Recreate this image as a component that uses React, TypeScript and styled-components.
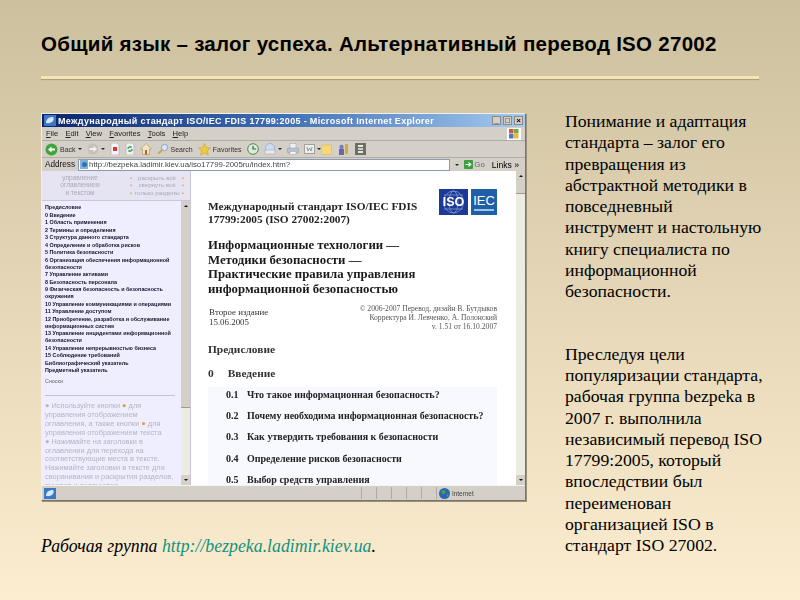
import styled, { createGlobalStyle } from 'styled-components';

const GlobalStyle = createGlobalStyle`
  html, body {
    margin: 0;
    padding: 0;
  }
`;

const Slide = styled.div`
  width: 800px;
  height: 600px;
  box-sizing: border-box;
  padding: 32px 41px 0;
  overflow: hidden;
  background: linear-gradient(180deg, #cdc09e 0%, #fcedd0 100%);
  font-family: 'Liberation Serif', serif;
  color: #000;
`;

const Title = styled.h1`
  margin: 0;
  font: bold 20.5px/24px 'Liberation Sans', sans-serif;
  letter-spacing: 0.28px;
  white-space: nowrap;
`;

const Rule = styled.div`
  height: 3px;
  margin-top: 20px;
  width: 718px;
  background: #f5e4b6;
  box-shadow: 0 1px 1px #a8987a;
`;

const Columns = styled.div`
  display: grid;
  grid-template-columns: 485px 200px;
  column-gap: 39px;
  margin-top: 34px;
`;

const LeftColumn = styled.div`
  display: flex;
  flex-direction: column;
`;

const Browser = styled.div`
  width: 485px;
  height: 388px;
  box-sizing: border-box;
  display: flex;
  flex-direction: column;
  background: #d4d0c8;
  border: 1px solid #f0efe8;
  border-right-color: #77746c;
  border-bottom-color: #77746c;
  box-shadow: 1px 1px 0 #9c917a;
  font-family: 'Liberation Sans', sans-serif;
  filter: blur(0.45px);
`;

const TitleBar = styled.div`
  height: 13px;
  flex: none;
  display: flex;
  align-items: center;
  gap: 2px;
  padding: 0 2px;
  background: linear-gradient(90deg, #0a246a 0%, #3f6fb5 50%, #a6caf0 100%);
  color: #fff;
  font-size: 9px;
  font-weight: bold;
  white-space: nowrap;
`;

const TitleText = styled.span`
  flex: 1;
  letter-spacing: 0.34px;
`;

const WinButton = styled.span`
  width: 9px;
  height: 9px;
  box-sizing: border-box;
  display: flex;
  align-items: center;
  justify-content: center;
  background: #d4d0c8;
  border: 1px solid #8a8880;
  color: #000;
  font-size: 8px;
  line-height: 1;
`;

const MenuBar = styled.div`
  height: 13px;
  flex: none;
  display: flex;
  align-items: center;
  gap: 7.2px;
  padding: 0 4px;
  position: relative;
  font-size: 7.6px;
  color: #222;
  border-bottom: 1px solid #b0ada4;
`;

const MenuItem = styled.span`
  &::first-letter {
    text-decoration: underline;
  }
`;

const Flag = styled.span`
  margin-left: auto;
  width: 14px;
  height: 12px;
  display: flex;
  align-items: center;
  justify-content: center;
  background: #fff;
`;

const ToolBar = styled.div`
  height: 17px;
  flex: none;
  box-sizing: border-box;
  display: flex;
  align-items: center;
  gap: 5px;
  padding: 0 3px;
  font-size: 7px;
  color: #333;
  border-bottom: 1px solid #b0ada4;
`;

const ToolEnd = styled.div`
  display: flex;
  align-items: center;
  gap: 6px;
  margin-left: -5px;
`;

const ToolLabel = styled.span`
  display: flex;
  align-items: center;
  gap: 2px;
`;

const Caret = styled.span`
  width: 0;
  height: 0;
  border-left: 2px solid transparent;
  border-right: 2px solid transparent;
  border-top: 2px solid #222;
`;

const AddressBar = styled.div`
  height: 13px;
  flex: none;
  display: flex;
  align-items: center;
  gap: 2px;
  padding: 0 6px 0 3px;
  font-size: 8.6px;
`;

const AddressLabel = styled.span`
  color: #111;
  margin-right: 1px;
  font-size: 8.2px;
`;

const AddressField = styled.div`
  flex: 1;
  height: 12px;
  box-sizing: border-box;
  display: flex;
  align-items: center;
  gap: 1px;
  padding: 0 1px;
  background: #fff;
  border: 1px solid #8a9ab5;
  font-size: 7.8px;
  color: #444;
  white-space: nowrap;
  overflow: hidden;
`;

const DropButton = styled.span`
  margin-left: auto;
  width: 9px;
  height: 10px;
  flex: none;
  display: flex;
  align-items: center;
  justify-content: center;
  background: #d4d0c8;
`;

const GoLabel = styled.span`
  display: flex;
  align-items: center;
  gap: 1px;
  color: #666;
  margin: 0 5px 0 1px;
  font-size: 7.8px;
`;

const Viewport = styled.div`
  flex: 1;
  min-height: 0;
  display: flex;
  background: #fff;
`;

const Sidebar = styled.div`
  width: 148px;
  flex: none;
  display: flex;
  flex-direction: column;
  background: #eeeefc;
`;

const SideHeader = styled.div`
  height: 30px;
  flex: none;
  box-sizing: border-box;
  display: grid;
  grid-template-columns: 76px 1fr;
  column-gap: 10px;
  align-items: center;
  padding: 2px 4px 3px 0;
  background: #e6e4f3;
  border-bottom: 1px solid #c7c7de;
  color: #a9a9b8;
  font-size: 6.2px;
  line-height: 7.3px;
`;

const SideHeaderTitle = styled.div`
  text-align: center;
  font-size: 6.5px;
`;

const SideControls = styled.div`
  display: flex;
  flex-direction: column;
`;

const SideControl = styled.div`
  display: flex;
  justify-content: space-between;
  padding: 0 2px;
  white-space: nowrap;
  text-align: center;
  &::before,
  &::after {
    content: '•';
    color: #d89f58;
  }
`;

const SideBody = styled.div`
  flex: 1;
  min-height: 0;
  display: flex;
`;

const SideScroll = styled.div`
  flex: 1;
  min-width: 0;
  overflow: hidden;
  padding: 3px 6px 0 3px;
  background: #eeeeff;
`;

const TocItem = styled.div<{ $plain?: boolean }>`
  font-size: 5.4px;
  line-height: 7px;
  padding-bottom: 0.5px;
  font-weight: ${(p) => (p.$plain ? 'normal' : 'bold')};
  color: #14142a;
`;

const Annex = styled(TocItem)`
  margin-top: 3px;
  color: #666;
`;

const Divider = styled.div`
  height: 1px;
  margin: 10px 0 6px;
  background: #c0c0da;
`;

const Hint = styled.p`
  margin: 0;
  font-size: 7.4px;
  line-height: 8.9px;
  color: #b4b4c6;
  white-space: nowrap;
`;

const HintMark = styled.span`
  color: #d89f58;
`;

const Scrollbar = styled.div<{ $thumbHeight: number }>`
  width: 9px;
  flex: none;
  display: flex;
  flex-direction: column;
  background: #ecebe4;
  &::before {
    content: '';
    height: ${(p) => p.$thumbHeight}px;
    background: #d4d0c8;
    border-bottom: 1px solid #9d9a92;
  }
`;

const ScrollTrack = styled.div`
  position: relative;
  display: flex;
`;

const ScrollArrow = styled.span<{ $down?: boolean }>`
  position: absolute;
  right: 0;
  ${(p) => (p.$down ? 'bottom: 0;' : 'top: 0;')}
  width: 9px;
  height: 10px;
  display: flex;
  align-items: center;
  justify-content: center;
  background: #d4d0c8;
  &::after {
    content: '';
    border-left: 2px solid transparent;
    border-right: 2px solid transparent;
    ${(p) => (p.$down ? 'border-top: 2px solid #111;' : 'border-bottom: 2px solid #111;')}
  }
`;

const Page = styled.div`
  flex: 1;
  min-width: 0;
  overflow: hidden;
  padding: 19px 19px 0 17px;
  font-family: 'Liberation Serif', serif;
  border-left: 1px solid #c9c7d6;
`;

const DocHead = styled.div`
  display: flex;
  justify-content: space-between;
  align-items: flex-start;
`;

const DocName = styled.div`
  margin-top: 10px;
  font-size: 11.3px;
  line-height: 12.6px;
  font-weight: bold;
  color: #222;
  white-space: nowrap;
`;

const Logos = styled.div`
  display: flex;
  gap: 3px;
  margin-top: -1px;
`;

const Logo = styled.div<{ $bg: string; $width: number }>`
  position: relative;
  width: ${(p) => p.$width}px;
  height: 26px;
  display: flex;
  align-items: center;
  justify-content: center;
  background: ${(p) => p.$bg};
  color: #fff;
  font-family: 'Liberation Sans', sans-serif;
`;

const LogoGlobe = styled.svg`
  position: absolute;
  inset: 0;
`;

const IsoText = styled.span`
  position: relative;
  font-size: 12.5px;
  font-weight: bold;
`;

const IecText = styled.span`
  font-size: 13px;
  margin-top: -4px;
`;

const IecBar = styled.span`
  position: absolute;
  left: 3px;
  right: 3px;
  bottom: 4px;
  height: 2px;
  background: #9fc4e6;
`;

const DocTitle = styled.h2`
  margin: 13px 0 0;
  font-size: 12.8px;
  line-height: 14.6px;
  font-weight: bold;
  color: #1a1a1a;
  white-space: nowrap;
`;

const Edition = styled.div`
  display: flex;
  justify-content: space-between;
  margin-top: 7px;
`;

const EditionLeft = styled.div`
  font-size: 8.9px;
  line-height: 10.4px;
  padding: 3px 0 0 1px;
  color: #333;
`;

const EditionRight = styled.div`
  text-align: right;
  font-size: 7.6px;
  line-height: 9px;
  color: #555;
  white-space: nowrap;
`;

const SectionHead = styled.div`
  display: flex;
  gap: 14px;
  margin-top: 12px;
  font-size: 11.4px;
  line-height: 12px;
  font-weight: bold;
  color: #333;
`;

const SectionNext = styled(SectionHead)`
  margin-top: 12px;
`;

const SubList = styled.div`
  margin-top: 8px;
  padding: 1.500px 0 0 18px;
  background: #f8f8ff;
`;

const SubRow = styled.div`
  display: flex;
  height: 13px;
  margin-bottom: 8.2px;
  align-items: center;
  font-size: 10px;
  font-weight: bold;
  color: #222;
  white-space: nowrap;
`;

const SubNum = styled.span`
  width: 21px;
  flex: none;
`;

const StatusBar = styled.div`
  height: 14px;
  flex: none;
  display: flex;
  align-items: center;
  border-top: 1px solid #f4f3ee;
  font-size: 6.4px;
  color: #444;
`;

const StatusMain = styled.div`
  flex: 1;
  padding-left: 2px;
  display: flex;
  align-items: center;
`;

const StatusCell = styled.div`
  width: 14px;
  height: 12px;
  border-left: 1px solid #aeaba3;
`;

const StatusZone = styled.div`
  width: 89px;
  height: 12px;
  display: flex;
  align-items: center;
  gap: 2px;
  padding-left: 2px;
  box-sizing: border-box;
  border-left: 1px solid #aeaba3;
`;

const Caption = styled.p`
  margin: 35px 0 0;
  font-size: 17.8px;
  line-height: 20px;
  font-style: italic;
  white-space: nowrap;
`;

const CaptionLink = styled.span`
  color: #14917f;
`;

const Aside = styled.div`
  display: flex;
  flex-direction: column;
  gap: 41px;
  margin-top: -2px;
`;

const AsideText = styled.p`
  margin: 0;
  font-size: 17.7px;
  line-height: 21.3px;
  color: #000;
  white-space: nowrap;
`;

const BackIcon = () => (
  <svg width="13" height="13" viewBox="0 0 13 13">
    <circle cx="6.5" cy="6.5" r="6" fill="#3fa53a" />
    <path d="M3 6.5 6.5 3.5V5.5H10V7.5H6.5V9.5Z" fill="#fff" />
  </svg>
);

const ForwardIcon = () => (
  <svg width="12" height="12" viewBox="0 0 12 12">
    <circle cx="6" cy="6" r="5.5" fill="#c4c2ba" />
    <path d="M10 6 6.5 3V5H2.500V7H6.500V9Z" fill="#f2f1ec" />
  </svg>
);

const StopIcon = () => (
  <svg width="10" height="12" viewBox="0 0 10 12">
    <path d="M1 0H7L9 2V12H1Z" fill="#f4f4f8" stroke="#a9a9b4" strokeWidth=".6" />
    <rect x="3" y="4" width="4" height="4" fill="#d8392c" />
  </svg>
);

const RefreshIcon = () => (
  <svg width="10" height="12" viewBox="0 0 10 12">
    <path d="M1 0H7L9 2V12H1Z" fill="#eef0f6" stroke="#a9a9b4" strokeWidth=".6" />
    <path d="M3 6a2 2 0 0 1 3.500-1.500M7 6a2 2 0 0 1-3.500 1.500" fill="none" stroke="#2f9a3a" strokeWidth="1.300" />
  </svg>
);

const HomeIcon = () => (
  <svg width="12" height="12" viewBox="0 0 12 12">
    <path d="M6 .5 .5 6H2.500V11.500H9.500V6H11.500Z" fill="#efe6c6" stroke="#b08a4a" strokeWidth=".6" />
    <rect x="5" y="7" width="2" height="4.500" fill="#c8572e" />
  </svg>
);

const SearchIcon = () => (
  <svg width="12" height="12" viewBox="0 0 12 12">
    <circle cx="7.500" cy="4.500" r="3.200" fill="#d7e5f4" stroke="#8aa7c6" />
    <path d="M5 7 1.500 10.500" stroke="#d2a23c" strokeWidth="1.800" />
  </svg>
);

const StarIcon = () => (
  <svg width="13" height="13" viewBox="0 0 13 13">
    <path d="M6.500.5 8.300 4.600 12.500 5 9.300 7.800 10.300 12.200 6.500 9.900 2.700 12.200 3.700 7.800.5 5 4.700 4.600Z" fill="#f0c93a" stroke="#c39b2a" strokeWidth=".5" />
  </svg>
);

const HistoryIcon = () => (
  <svg width="12" height="12" viewBox="0 0 12 12">
    <circle cx="6" cy="6" r="5.300" fill="#dfe8da" stroke="#4c8a52" />
    <path d="M6 3V6H9" fill="none" stroke="#2c6c3a" strokeWidth="1.200" />
  </svg>
);

const MailIcon = () => (
  <svg width="12" height="12" viewBox="0 0 12 12">
    <circle cx="6" cy="5" r="4.500" fill="#cddcee" stroke="#8da7c6" strokeWidth=".7" />
    <rect x="1" y="7" width="10" height="4" fill="#e9e9ee" stroke="#9aa0ac" strokeWidth=".5" />
  </svg>
);

const PrintIcon = () => (
  <svg width="12" height="12" viewBox="0 0 12 12">
    <rect x="3" y=".5" width="6" height="5" fill="#eef0f6" stroke="#9aa0ac" strokeWidth=".5" />
    <rect x=".5" y="5" width="11" height="5" rx="1" fill="#bcc2cf" stroke="#8d93a0" strokeWidth=".5" />
    <rect x="3" y="8.500" width="6" height="3" fill="#f6f6f8" stroke="#9aa0ac" strokeWidth=".5" />
  </svg>
);

const EditIcon = () => (
  <svg width="11" height="10" viewBox="0 0 11 10">
    <rect x=".5" y=".5" width="10" height="9" fill="#eeeee8" stroke="#a2a29a" />
    <path d="M3 3 4 7 5.500 4 7 7 8 3" fill="none" stroke="#7a86a8" strokeWidth=".8" />
  </svg>
);

const FolderIcon = () => (
  <svg width="11" height="11" viewBox="0 0 11 11">
    <rect x=".5" y="1" width="10" height="9.500" rx="1" fill="#f5d978" stroke="#d6b24d" strokeWidth=".5" />
  </svg>
);

const MessengerIcon = () => (
  <svg width="11" height="12" viewBox="0 0 11 12">
    <circle cx="3.500" cy="4" r="2.200" fill="#7d79b8" />
    <rect x="1" y="6" width="5" height="6" fill="#6a66a8" />
    <rect x="7" y="1" width="3" height="10" fill="#c9b13e" />
  </svg>
);

const ResearchIcon = () => (
  <svg width="11" height="12" viewBox="0 0 11 12">
    <rect width="11" height="12" fill="#6e6e68" />
    <rect x="3" y="2" width="5" height="2" fill="#e6e6de" />
    <rect x="3" y="5" width="5" height="2" fill="#cfcfc6" />
    <rect x="3" y="8" width="5" height="2" fill="#e6e6de" />
  </svg>
);

const PageIcon = () => (
  <svg width="8" height="9" viewBox="0 0 8 9">
    <rect width="8" height="9" fill="#7fb0de" />
    <circle cx="4.500" cy="4.500" r="2.500" fill="#2f6fb5" />
  </svg>
);

const GoIcon = () => (
  <svg width="9" height="9" viewBox="0 0 9 9">
    <rect width="9" height="9" rx="1" fill="#3a9f3f" />
    <path d="M1.500 4.500H6M4.500 2.500 6.800 4.500 4.500 6.500" fill="none" stroke="#fff" strokeWidth="1.100" />
  </svg>
);

const XpFlagIcon = () => (
  <svg width="10" height="10" viewBox="0 0 10 10">
    <rect x="0" y="0" width="4.500" height="4.500" fill="#d8553a" />
    <rect x="5" y="0" width="4.500" height="4.500" fill="#78a83c" />
    <rect x="0" y="5" width="4.500" height="4.500" fill="#4a78c8" />
    <rect x="5" y="5" width="4.500" height="4.500" fill="#e8b93a" />
  </svg>
);

const EarthIcon = ({ size }: { size: number }) => (
  <svg width={size} height={size} viewBox="0 0 10 10">
    <circle cx="5" cy="5" r="5" fill="#2a66b8" />
    <path d="M2 2.500 5 1.500 6 4 4 6 2.500 5ZM7 5.500 9 6 7.500 8.500Z" fill="#4f9d46" />
  </svg>
);

const WindowDoc = () => (
  <svg width="12" height="11" viewBox="0 0 12 11">
    <rect width="12" height="11" fill="#3c78c8" />
    <path d="M2 8C2 4 5 2 9 2 11 5 8 9 2 8Z" fill="#d8e8f8" />
  </svg>
);

const tocItems = [
  'Предисловие',
  '0  Введение',
  '1  Область применения',
  '2  Термины и определения',
  '3  Структура данного стандарта',
  '4  Определение и обработка рисков',
  '5  Политика безопасности',
  '6  Организация обеспечения информационной безопасности',
  '7  Управление активами',
  '8  Безопасность персонала',
  '9  Физическая безопасность и безопасность окружения',
  '10  Управление коммуникациями и операциями',
  '11  Управление доступом',
  '12  Приобретение, разработка и обслуживание информационных систем',
  '13  Управление инцидентами информационной безопасности',
  '14  Управление непрерывностью бизнеса',
  '15  Соблюдение требований',
  'Библиографический указатель',
  'Предметный указатель',
];

const subItems = [
  ['0.1', 'Что такое информационная безопасность?'],
  ['0.2', 'Почему необходима информационная безопасность?'],
  ['0.3', 'Как утвердить требования к безопасности'],
  ['0.4', 'Определение рисков безопасности'],
  ['0.5', 'Выбор средств управления'],
];

export default function App() {
  return (
    <Slide>
      <GlobalStyle />
      <Title>Общий язык – залог успеха. Альтернативный перевод ISO 27002</Title>
      <Rule />
      <Columns>
        <LeftColumn>
          <Browser>
            <TitleBar>
              <WindowDoc />
              <TitleText>Международный стандарт ISO/IEC FDIS 17799:2005 - Microsoft Internet Explorer</TitleText>
              <WinButton>_</WinButton>
              <WinButton>□</WinButton>
              <WinButton>×</WinButton>
            </TitleBar>
            <MenuBar>
              <MenuItem>File</MenuItem>
              <MenuItem>Edit</MenuItem>
              <MenuItem>View</MenuItem>
              <MenuItem>Favorites</MenuItem>
              <MenuItem>Tools</MenuItem>
              <MenuItem>Help</MenuItem>
              <Flag>
                <XpFlagIcon />
              </Flag>
            </MenuBar>
            <ToolBar>
              <ToolLabel>
                <BackIcon />
                Back
                <Caret />
              </ToolLabel>
              <ToolLabel>
                <ForwardIcon />
                <Caret />
              </ToolLabel>
              <StopIcon />
              <RefreshIcon />
              <HomeIcon />
              <ToolLabel>
                <SearchIcon />
                Search
              </ToolLabel>
              <ToolLabel>
                <StarIcon />
                Favorites
              </ToolLabel>
              <HistoryIcon />
              <ToolLabel>
                <MailIcon />
                <Caret />
              </ToolLabel>
              <PrintIcon />
              <ToolLabel>
                <EditIcon />
                <Caret />
              </ToolLabel>
              <ToolEnd>
                <FolderIcon />
                <MessengerIcon />
                <ResearchIcon />
              </ToolEnd>
            </ToolBar>
            <AddressBar>
              <AddressLabel>Address</AddressLabel>
              <AddressField>
                <PageIcon />
                http://bezpeka.ladimir.kiev.ua/iso17799-2005ru/index.htm?
              </AddressField>
              <DropButton>
                <Caret />
              </DropButton>
              <GoLabel>
                <GoIcon />
                Go
              </GoLabel>
              <span>Links »</span>
            </AddressBar>
            <Viewport>
              <Sidebar>
                <SideHeader>
                  <SideHeaderTitle>
                    управление
                    <br />
                    оглавлением
                    <br />
                    и текстом
                  </SideHeaderTitle>
                  <SideControls>
                    <SideControl>раскрыть всё</SideControl>
                    <SideControl>свернуть всё</SideControl>
                    <SideControl>только разделы</SideControl>
                  </SideControls>
                </SideHeader>
                <SideBody>
                  <SideScroll>
                    {tocItems.map((item) => (
                      <TocItem key={item}>{item}</TocItem>
                    ))}
                    <Annex $plain>Сноски</Annex>
                    <Divider />
                    <Hint>
                      ● Используйте кнопки <HintMark>●</HintMark> для
                      <br />
                      управления отображением
                      <br />
                      оглавления, а также кнопки <HintMark>●</HintMark> для
                      <br />
                      управления отображением текста
                      <br />● Нажимайте на заголовки в
                      <br />
                      оглавлении для перехода на
                      <br />
                      соответствующие места в тексте.
                      <br />
                      Нажимайте заголовки в тексте для
                      <br />
                      сворачивания и раскрытия разделов,
                      <br />
                      пунктов и подпунктов.
                    </Hint>
                  </SideScroll>
                  <ScrollTrack>
                    <Scrollbar $thumbHeight={206} />
                    <ScrollArrow />
                    <ScrollArrow $down />
                  </ScrollTrack>
                </SideBody>
              </Sidebar>
              <Page>
                <DocHead>
                  <DocName>
                    Международный стандарт ISO/IEC FDIS
                    <br />
                    17799:2005 (ISO 27002:2007)
                  </DocName>
                  <Logos>
                    <Logo $bg="#1b3a97" $width={29}>
                      <LogoGlobe width="29" height="26" viewBox="0 0 29 26">
                        <ellipse cx="14.500" cy="13" rx="10" ry="11" fill="none" stroke="#8ea2d6" strokeWidth=".7" />
                        <ellipse cx="14.500" cy="13" rx="4.500" ry="11" fill="none" stroke="#8ea2d6" strokeWidth=".7" />
                        <path d="M5 6H24M5 20H24" stroke="#8ea2d6" strokeWidth=".7" />
                      </LogoGlobe>
                      <IsoText>ISO</IsoText>
                    </Logo>
                    <Logo $bg="#1f5fa8" $width={26}>
                      <IecText>IEC</IecText>
                      <IecBar />
                    </Logo>
                  </Logos>
                </DocHead>
                <DocTitle>
                  Информационные технологии —
                  <br />
                  Методики безопасности —
                  <br />
                  Практические правила управления
                  <br />
                  информационной безопасностью
                </DocTitle>
                <Edition>
                  <EditionLeft>
                    Второе издание
                    <br />
                    15.06.2005
                  </EditionLeft>
                  <EditionRight>
                    © 2006-2007 Перевод, дизайн В. Бутдыков
                    <br />
                    Корректура И. Левченко, А. Полонский
                    <br />
                    v. 1.51 от 16.10.2007
                  </EditionRight>
                </Edition>
                <SectionHead>Предисловие</SectionHead>
                <SectionNext>
                  <span>0</span>
                  <span>Введение</span>
                </SectionNext>
                <SubList>
                  {subItems.map(([num, text]) => (
                    <SubRow key={num}>
                      <SubNum>{num}</SubNum>
                      {text}
                    </SubRow>
                  ))}
                </SubList>
              </Page>
              <ScrollTrack>
                <Scrollbar $thumbHeight={22} />
                <ScrollArrow />
                <ScrollArrow $down />
              </ScrollTrack>
            </Viewport>
            <StatusBar>
              <StatusMain>
                <WindowDoc />
              </StatusMain>
              <StatusCell />
              <StatusCell />
              <StatusCell />
              <StatusCell />
              <StatusCell />
              <StatusZone>
                <EarthIcon size={11} />
                Internet
              </StatusZone>
            </StatusBar>
          </Browser>
          <Caption>
            Рабочая группа <CaptionLink>http://bezpeka.ladimir.kiev.ua</CaptionLink>.
          </Caption>
        </LeftColumn>
        <Aside>
          <AsideText>
            Понимание и адаптация
            <br />
            стандарта – залог его
            <br />
            превращения из
            <br />
            абстрактной методики в
            <br />
            повседневный
            <br />
            инструмент и настольную
            <br />
            книгу специалиста по
            <br />
            информационной
            <br />
            безопасности.
          </AsideText>
          <AsideText>
            Преследуя цели
            <br />
            популяризации стандарта,
            <br />
            рабочая группа bezpeka в
            <br />
            2007 г. выполнила
            <br />
            независимый перевод ISO
            <br />
            17799:2005, который
            <br />
            впоследствии был
            <br />
            переименован
            <br />
            организацией ISO в
            <br />
            стандарт ISO 27002.
          </AsideText>
        </Aside>
      </Columns>
    </Slide>
  );
}
